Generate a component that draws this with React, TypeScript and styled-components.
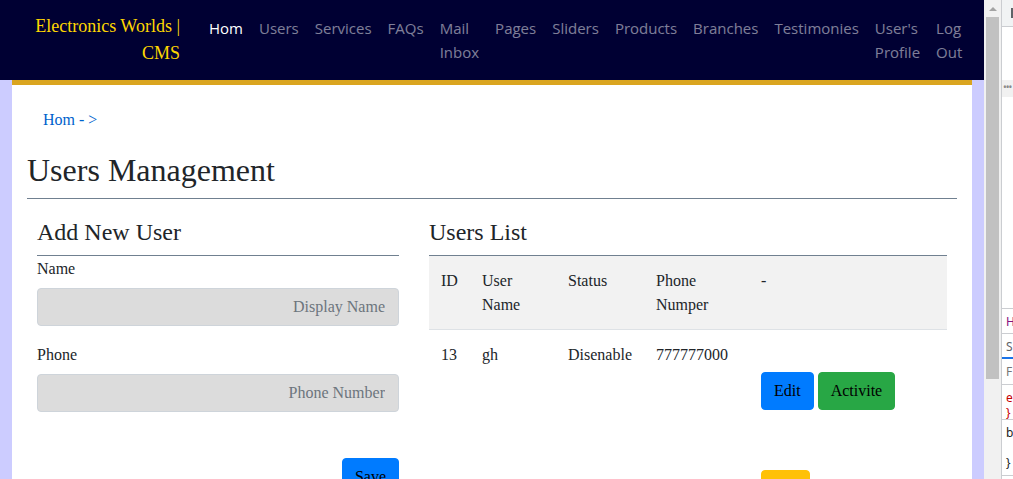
import React from "react";
import styled, { createGlobalStyle } from "styled-components";

const GlobalStyle = createGlobalStyle`
  html, body { margin: 0; padding: 0; overflow: hidden; background: #ffffff; }
  body {
    font-family: "Liberation Serif", "Times New Roman", serif;
    font-size: 16px;
    color: #212529;
  }
  * { box-sizing: border-box; }
`;

const Screen = styled.div`
  display: flex;
  width: 1013px;
  height: 479px;
  overflow: hidden;
`;

const Page = styled.div`
  width: 984px;
  flex: none;
  display: flex;
  flex-direction: column;
  background: #ccccff;
`;

const Navbar = styled.nav`
  height: 80px;
  flex: none;
  display: flex;
  align-items: center;
  padding: 8px 16px;
  background: #000033;
`;

const Brand = styled.a`
  flex: none;
  width: 148px;
  margin-left: 16px;
  margin-right: 21px;
  text-align: right;
  white-space: nowrap;
  font-family: "Liberation Serif", "Times New Roman", serif;
  font-size: 18px;
  line-height: 27px;
  color: #ffd700;
`;

const NavList = styled.ul`
  display: flex;
  align-items: flex-start;
  list-style: none;
  margin: 0;
  padding: 0;
  height: 64px;
`;

const NavLink = styled.a<{ $active?: boolean }>`
  display: block;
  padding: 8px;
  font-family: "Open Sans", "Noto Sans", sans-serif;
  font-size: 15px;
  line-height: 24px;
  white-space: nowrap;
  color: ${(p) => (p.$active ? "#ffffff" : "rgba(255, 255, 255, 0.5)")};
`;

const Container = styled.main`
  width: 960px;
  margin: 0 auto;
  flex: 1;
  background: #ffffff;
  border-top: 5px solid #daa520;
  padding: 0 15px;
`;

const Breadcrumb = styled.div`
  margin-top: 11px;
  padding: 12px 16px;
  line-height: 24px;
  color: #0062cc;
`;

const Title = styled.h1`
  margin: 7px 0 0;
  font-size: 32px;
  font-weight: 400;
  line-height: 38px;
`;

const Rule = styled.div<{ $gap?: number }>`
  height: 1px;
  margin-top: ${(p) => p.$gap ?? 0}px;
  background: #708090;
`;

const Columns = styled.div`
  display: grid;
  grid-template-columns: 382px 1fr;
  column-gap: 10px;
  padding-top: 19px;
`;

const Column = styled.section`
  padding: 0 10px;
`;

const SectionTitle = styled.h2`
  margin: 0 0 8px;
  font-size: 24px;
  font-weight: 400;
  line-height: 29px;
`;

const FormGroup = styled.div`
  margin-bottom: 16px;
`;

const Label = styled.label`
  display: block;
  padding-top: 1px;
  line-height: 24px;
  margin-bottom: 7px;
`;

const Input = styled.input`
  display: block;
  width: 100%;
  height: 38px;
  padding: 6px 13px;
  background: #dcdcdc;
  border: 1px solid #ced4da;
  border-radius: 4px;
  text-align: right;
  font-family: "Liberation Serif", "Times New Roman", serif;
  font-size: 16px;
  color: #495057;
  &::placeholder { color: #6c757d; }
`;

const SaveRow = styled.div`
  display: flex;
  justify-content: flex-end;
  padding-top: 30px;
`;

const Button = styled.button<{ $color: string }>`
  padding: 6px 12px;
  border: 1px solid ${(p) => p.$color};
  border-radius: 4px;
  background: ${(p) => p.$color};
  font-family: "Liberation Serif", "Times New Roman", serif;
  font-size: 16px;
  line-height: 24px;
  color: #000000;
`;

const Table = styled.table`
  width: 100%;
  border-collapse: collapse;
  table-layout: fixed;
`;

const Th = styled.th`
  padding: 13px 12px 12px;
  text-align: left;
  vertical-align: top;
  font-weight: 400;
  line-height: 24px;
  background: #f2f2f2;
  border-bottom: 1px solid #dee2e6;
`;

const Td = styled.td<{ $wrap?: boolean }>`
  padding: 13px 12px 12px;
  vertical-align: top;
  line-height: 24px;
  white-space: ${(p) => (p.$wrap ? "normal" : "nowrap")};
`;

const CellSpacer = styled.div`
  height: 24px;
`;

const ActionRow = styled.div<{ $top: number }>`
  display: flex;
  gap: 4px;
  margin-top: ${(p) => p.$top}px;
`;

const Scrollbar = styled.div`
  width: 17px;
  flex: none;
  display: flex;
  flex-direction: column;
  align-items: center;
  background: #f1f1f1;
`;

const ScrollArrow = styled.div`
  height: 17px;
  width: 100%;
  display: flex;
  align-items: center;
  justify-content: center;
`;

const ArrowUp = styled.span`
  width: 0;
  height: 0;
  border-left: 4px solid transparent;
  border-right: 4px solid transparent;
  border-bottom: 4px solid #a3a3a3;
`;

const ScrollThumb = styled.div`
  width: 13px;
  height: 362px;
  background: #c1c1c1;
`;

const DevPanel = styled.aside`
  width: 12px;
  flex: none;
  display: flex;
  flex-direction: column;
  overflow: hidden;
  background: #ffffff;
  border-left: 1px solid #cbcdd1;
  font-family: "Noto Sans", "DejaVu Sans", sans-serif;
  font-size: 12px;
  line-height: 15px;
`;

const DevToolbar = styled.div`
  height: 27px;
  flex: none;
  padding: 8px 0 0 9px;
  background: #f1f3f4;
  border-bottom: 1px solid #cbcdd1;
`;

const DevGlyph = styled.span`
  display: block;
  width: 3px;
  height: 10px;
  background: #5f6368;
`;

const DevBlank = styled.div<{ $h: number }>`
  height: ${(p) => p.$h}px;
  flex: none;
`;

const DevBand = styled.div`
  height: 17px;
  flex: none;
  padding-left: 1px;
  background: #f1f1f1;
  color: #8a8a8a;
  font-size: 10px;
  line-height: 14px;
  letter-spacing: -1px;
`;

const DevRow = styled.div<{ $h: number; $color: string; $line?: boolean }>`
  height: ${(p) => p.$h}px;
  flex: none;
  padding: 5px 0 0 4px;
  color: ${(p) => p.$color};
  white-space: pre;
  border-top: ${(p) => (p.$line ? "1px solid #cbcdd1" : "none")};
`;

const DevTabLine = styled.div`
  height: 2px;
  flex: none;
  background: #1a73e8;
`;

const navItems: { label: React.ReactNode; active?: boolean }[] = [
  { label: "Hom", active: true },
  { label: "Users" },
  { label: "Services" },
  { label: "FAQs" },
  { label: <>Mail<br />Inbox</> },
  { label: "Pages" },
  { label: "Sliders" },
  { label: "Products" },
  { label: "Branches" },
  { label: "Testimonies" },
  { label: <>User's<br />Profile</> },
  { label: <>Log<br />Out</> },
];

export default function App() {
  return (
    <>
      <GlobalStyle />
      <Screen>
        <Page>
          <Navbar>
            <Brand>
              Electronics Worlds |<br />CMS
            </Brand>
            <NavList>
              {navItems.map((item, i) => (
                <li key={i}>
                  <NavLink $active={item.active}>{item.label}</NavLink>
                </li>
              ))}
            </NavList>
          </Navbar>
          <Container>
            <Breadcrumb>Hom - &gt;</Breadcrumb>
            <Title>Users Management</Title>
            <Rule $gap={9} />
            <Columns>
              <Column>
                <SectionTitle>Add New User</SectionTitle>
                <Rule />
                <FormGroup>
                  <Label>Name</Label>
                  <Input placeholder="Display Name" />
                </FormGroup>
                <FormGroup>
                  <Label>Phone</Label>
                  <Input placeholder="Phone Number" />
                </FormGroup>
                <SaveRow>
                  <Button $color="#007bff">Save</Button>
                </SaveRow>
              </Column>
              <Column>
                <SectionTitle>Users List</SectionTitle>
                <Rule />
                <Table>
                  <colgroup>
                    <col style={{ width: 41 }} />
                    <col style={{ width: 86 }} />
                    <col style={{ width: 88 }} />
                    <col style={{ width: 105 }} />
                    <col />
                  </colgroup>
                  <thead>
                    <tr>
                      <Th>ID</Th>
                      <Th>User Name</Th>
                      <Th>Status</Th>
                      <Th>Phone Numper</Th>
                      <Th>-</Th>
                    </tr>
                  </thead>
                  <tbody>
                    <tr>
                      <Td>13</Td>
                      <Td>gh</Td>
                      <Td>Disenable</Td>
                      <Td>777777000</Td>
                      <Td $wrap>
                        <CellSpacer />
                        <ActionRow $top={5}>
                          <Button $color="#007bff">Edit</Button>
                          <Button $color="#28a745">Activite</Button>
                        </ActionRow>
                        <ActionRow $top={60}>
                          <Button $color="#ffc107">Del</Button>
                        </ActionRow>
                      </Td>
                    </tr>
                  </tbody>
                </Table>
              </Column>
            </Columns>
          </Container>
        </Page>
        <Scrollbar>
          <ScrollArrow>
            <ArrowUp />
          </ScrollArrow>
          <ScrollThumb />
        </Scrollbar>
        <DevPanel>
          <DevToolbar>
            <DevGlyph />
          </DevToolbar>
          <DevBlank $h={53} />
          <DevBand>•••</DevBand>
          <DevBlank $h={211} />
          <DevRow $h={25} $color="#881280" $line>H</DevRow>
          <DevRow $h={24} $color="#5f6368" $line>S</DevRow>
          <DevTabLine />
          <DevRow $h={25} $color="#757575">F</DevRow>
          <DevRow $h={35} $color="#c80000" $line>{"e\n}"}</DevRow>
          <DevRow $h={56} $color="#222222" $line>{"b\n\n}"}</DevRow>
          <DevRow $h={10} $color="#222222" $line />
        </DevPanel>
      </Screen>
    </>
  );
}
